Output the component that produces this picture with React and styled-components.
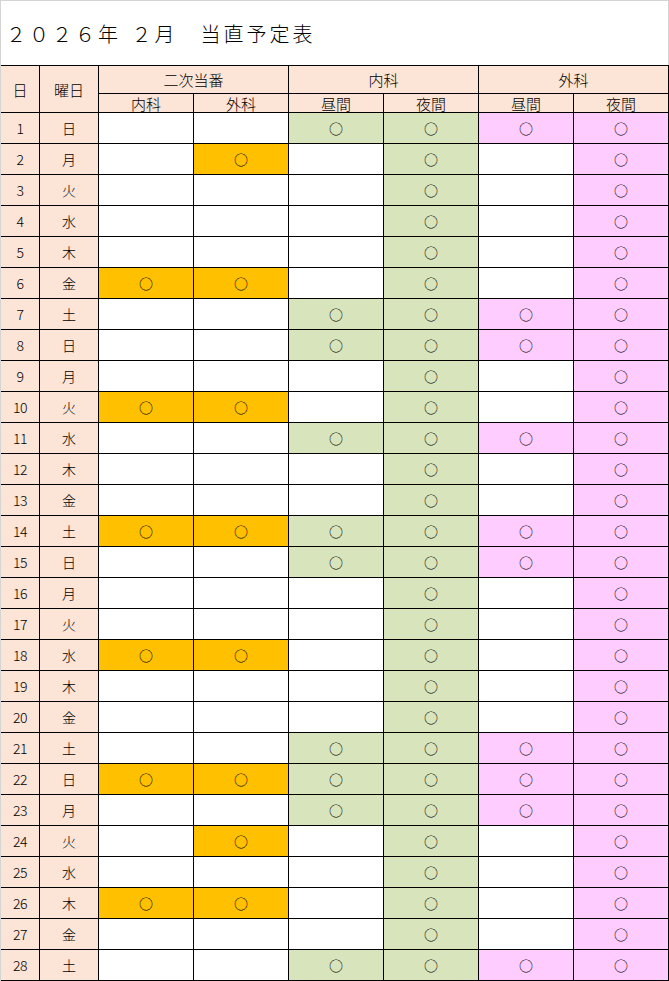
import styled, { createGlobalStyle } from "styled-components";

const GlobalStyle = createGlobalStyle`
  html, body {
    margin: 0;
    padding: 0;
    background: #fff;
  }
  body {
    font-family: "Noto Sans CJK JP", "Noto Sans", sans-serif;
    color: #000;
  }
`;

const WEEK = ["日", "月", "火", "水", "木", "金", "土"];
// 2026年2月1日は日曜日
const HOLIDAY_DAYS = [1, 7, 8, 11, 14, 15, 21, 22, 23, 28];
const SECOND_BOTH = [6, 10, 14, 18, 22, 26];
const SECOND_GEKA_ONLY = [2, 24];

const days = Array.from({ length: 28 }, (_, i) => {
  const d = i + 1;
  return {
    day: d,
    week: WEEK[i % 7],
    naika2: SECOND_BOTH.includes(d),
    geka2: SECOND_BOTH.includes(d) || SECOND_GEKA_ONLY.includes(d),
    daytime: HOLIDAY_DAYS.includes(d),
  };
});

const fills = {
  head: "#fce4d6",
  orange: "#ffc000",
  green: "#d8e4bc",
  pink: "#ffccff",
  none: "#ffffff",
};

const App = () => {
  const rows = days.map((item) => (
    <Row key={item.day}>
      <NumCell $fill="head">{item.day}</NumCell>
      <Cell $fill="head">{item.week}</Cell>
      <Cell $fill={item.naika2 ? "orange" : "none"}>{item.naika2 && <Mark>○</Mark>}</Cell>
      <Cell $fill={item.geka2 ? "orange" : "none"}>{item.geka2 && <Mark>○</Mark>}</Cell>
      <Cell $fill={item.daytime ? "green" : "none"}>{item.daytime && <Mark>○</Mark>}</Cell>
      <Cell $fill="green"><Mark>○</Mark></Cell>
      <Cell $fill={item.daytime ? "pink" : "none"}>{item.daytime && <Mark>○</Mark>}</Cell>
      <Cell $fill="pink"><Mark>○</Mark></Cell>
    </Row>
  ));

  return (
    <>
      <GlobalStyle />
      <Page>
        <TitleBar>
          <Title>２０２６年 ２月　当直予定表</Title>
        </TitleBar>
        <Sheet>
          <HeadCell $rows={2}>日</HeadCell>
          <HeadCell $rows={2}>曜日</HeadCell>
          <HeadCell $cols={2}>二次当番</HeadCell>
          <HeadCell $cols={2}>内科</HeadCell>
          <HeadCell $cols={2}>外科</HeadCell>
          <SubHead>内科</SubHead>
          <SubHead>外科</SubHead>
          <SubHead>昼間</SubHead>
          <SubHead>夜間</SubHead>
          <SubHead>昼間</SubHead>
          <SubHead>夜間</SubHead>
          {rows}
        </Sheet>
      </Page>
    </>
  );
};

const Page = styled.div`
  width: 669px;
  box-sizing: border-box;
  border-top: 1px solid #d4d4d4;
  border-left: 1px solid #d4d4d4;
`;

// タイトル
const TitleBar = styled.div`
  height: 64px;
  box-sizing: border-box;
  border-right: 1px solid #d4d4d4;
  display: flex;
  align-items: center;
  padding: 2px 0 0 5px;
`;

const Title = styled.h1`
  margin: 0;
  font-size: 20px;
  font-weight: 300;
  letter-spacing: 3px;
  word-spacing: 3px;
  line-height: 1;
`;

// 表
const Sheet = styled.div`
  display: grid;
  grid-template-columns: 39px 59px repeat(6, 95px);
  grid-template-rows: 28px 19px repeat(28, 31px);
  border-top: 1px solid #000;
`;

const Row = styled.div`
  display: contents;
`;

const Cell = styled.div`
  box-sizing: border-box;
  border-right: 1px solid #000;
  border-bottom: 1px solid #000;
  background: ${(p) => fills[p.$fill]};
  display: flex;
  align-items: center;
  justify-content: center;
  font-size: 14px;
  font-weight: 300;
  line-height: 1;
`;

const NumCell = styled(Cell)`
  font-size: 14px;
  letter-spacing: -0.5px;
`;

const HeadCell = styled(Cell).attrs({ $fill: "head" })`
  grid-column: span ${(p) => p.$cols || 1};
  grid-row: span ${(p) => p.$rows || 1};
  font-size: 15px;
`;

const SubHead = styled(Cell).attrs({ $fill: "head" })`
  font-size: 15px;
  padding-top: 1px;
`;

const Mark = styled.span`
  font-size: 14px;
  font-weight: 400;
  line-height: 1;
  color: #000;
`;

export default App;
